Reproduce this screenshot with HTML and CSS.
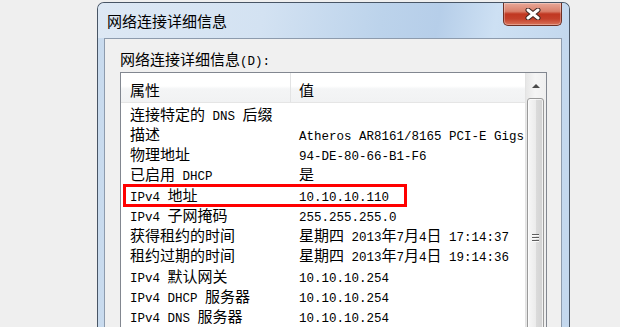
FILE: index.html
```html
<!DOCTYPE html>
<html lang="zh-CN">

<head>
    <meta charset="UTF-8">
    <title>网络连接详细信息</title>
    <link rel="stylesheet" href="styles.css">
</head>

<body>
    <div class="window">
        <div class="titlebar">
            <span class="title">网络连接详细信息</span>
            <button class="close" title="关闭">
                <svg width="16" height="12" viewBox="0 0 16 12">
                    <path d="M3 2 L13 10 M13 2 L3 10" stroke="#3b2420" stroke-width="5" stroke-linecap="round" />
                    <path d="M3 2 L13 10 M13 2 L3 10" stroke="#fff" stroke-width="3" stroke-linecap="round" />
                </svg>
            </button>
        </div>
        <div class="client">
            <div class="caption">网络连接详细信息<span class="en">(D):</span></div>
            <div class="listbox">
                <div class="list">
                    <div class="head">
                        <div class="col-name">属性</div>
                        <div class="col-value">值</div>
                    </div>
                    <div class="rows">
                        <div class="row"><div class="name">连接特定的<span class="en"> DNS </span>后缀</div><div class="value"></div></div>
                        <div class="row"><div class="name">描述</div><div class="value"><span class="en">Atheros AR8161/8165 PCI-E Gigs</span></div></div>
                        <div class="row"><div class="name">物理地址</div><div class="value"><span class="en">94-DE-80-66-B1-F6</span></div></div>
                        <div class="row"><div class="name">已启用<span class="en"> DHCP</span></div><div class="value">是</div></div>
                        <div class="row">
                            <div class="name"><span class="en">IPv4 </span>地址</div><div class="value"><span class="en">10.10.10.110</span></div>
                            <div class="mark"></div>
                        </div>
                        <div class="row"><div class="name"><span class="en">IPv4 </span>子网掩码</div><div class="value"><span class="en">255.255.255.0</span></div></div>
                        <div class="row"><div class="name">获得租约的时间</div><div class="value">星期四<span class="en"> 2013</span>年<span class="en">7</span>月<span class="en">4</span>日<span class="en"> 17:14:37</span></div></div>
                        <div class="row"><div class="name">租约过期的时间</div><div class="value">星期四<span class="en"> 2013</span>年<span class="en">7</span>月<span class="en">4</span>日<span class="en"> 19:14:36</span></div></div>
                        <div class="row"><div class="name"><span class="en">IPv4 </span>默认网关</div><div class="value"><span class="en">10.10.10.254</span></div></div>
                        <div class="row"><div class="name"><span class="en">IPv4 DHCP </span>服务器</div><div class="value"><span class="en">10.10.10.254</span></div></div>
                        <div class="row"><div class="name"><span class="en">IPv4 DNS </span>服务器</div><div class="value"><span class="en">10.10.10.254</span></div></div>
                    </div>
                </div>
                <div class="scrollbar">
                    <div class="arrow-up"></div>
                    <div class="thumb"><span class="grip"></span></div>
                </div>
            </div>
        </div>
    </div>
</body>

</html>
```

FILE: styles.css
```css
body {
    margin: 0;
    height: 327px;
    overflow: hidden;
    background-color: #efefef;
    font-family: "Noto Sans CJK SC", sans-serif;
    font-size: 15px;
    color: #000;
}

.en {
    font-family: "Liberation Mono", monospace;
    font-size: 12.5px;
}

.window {
    box-sizing: border-box;
    width: 473px;
    height: 325px;
    margin: 2px 0 0 97px;
    border: 1px solid #485565;
    border-bottom: none;
    border-radius: 7px 7px 0 0;
    background: linear-gradient(to right, #c9dbee, #bcd2ea 60%, #c4d8ee);
    display: flex;
    flex-direction: column;
}

.titlebar {
    height: 35px;
    flex: none;
    display: flex;
    align-items: center;
    padding-left: 9px;
    border-radius: 6px 6px 0 0;
    background: linear-gradient(100deg, #dde8f4 0%, #d3e2f2 35%, #bcd3eb 60%, #b6cee9 72%, #cde0f3 84%, #c3d8ee 100%);
}

.title {
    line-height: 20px;
    margin-top: 1px;
}

.close {
    margin-left: auto;
    margin-right: 7px;
    align-self: flex-start;
    width: 59px;
    height: 23px;
    padding: 0;
    border: 1px solid #6e3024;
    border-top: none;
    border-radius: 0 0 5px 5px;
    background: linear-gradient(#e8a898 0%, #d9806b 38%, #c03721 50%, #c4402a 72%, #d9745a 100%);
    box-shadow: inset 0 0 0 1px rgba(255, 255, 255, 0.3);
    display: flex;
    align-items: center;
    justify-content: center;
}

.client {
    flex: 1;
    min-height: 0;
    margin: 0 7px 0 6px;
    border: 1px solid #8d9bad;
    border-bottom: none;
    background-color: #f0f0f0;
    display: flex;
    flex-direction: column;
}

.caption {
    margin: 11px 0 0 15px;
    height: 18px;
    line-height: 18px;
}

.listbox {
    box-sizing: border-box;
    width: 427px;
    flex: 1;
    min-height: 0;
    margin: 4px 0 0 15px;
    border: 1px solid #828790;
    border-bottom: none;
    background-color: #fff;
    display: flex;
}

.list {
    flex: 1;
    min-width: 0;
    overflow: hidden;
}

.head {
    display: flex;
    height: 29px;
    border-bottom: 1px solid #e5e5e5;
    background: linear-gradient(#fff 0%, #fff 45%, #f4f5f6 55%, #f1f2f3 100%);
}

.head>div {
    box-sizing: border-box;
    height: 29px;
    padding-top: 6px;
    line-height: 22px;
}

.col-name {
    width: 170px;
    padding-left: 9px;
    border-right: 1px solid #e2e3e4;
}

.col-value {
    padding-left: 8px;
}

.rows {
    padding-top: 0.5px;
}

.row {
    position: relative;
    display: flex;
    height: 20.25px;
    line-height: 20px;
    white-space: nowrap;
}

.name {
    box-sizing: border-box;
    width: 178px;
    flex: none;
    padding-left: 9px;
}

.value {
    flex: none;
}

/* cadre rouge autour de la ligne IPv4 */
.mark {
    position: absolute;
    left: 2px;
    top: -0.5px;
    box-sizing: border-box;
    width: 284px;
    height: 23px;
    border: 3px solid #f00;
}

.scrollbar {
    box-sizing: border-box;
    width: 21px;
    flex: none;
    overflow: hidden;
    border-left: 1px solid #e3e3e3;
    background: linear-gradient(to right, #e7e7e7, #f5f5f5 45%, #efefef);
}

.arrow-up {
    height: 25px;
    display: flex;
    align-items: center;
    justify-content: center;
}

.arrow-up::before {
    content: "";
    border-left: 4px solid transparent;
    border-right: 4px solid transparent;
    border-bottom: 4px solid #4a4a4a;
    margin-top: 1px;
}

.thumb {
    box-sizing: border-box;
    width: 17px;
    height: 280px;
    margin-left: 1px;
    border: 1px solid #9a9a9a;
    border-radius: 3px;
    background: linear-gradient(to right, #f7f7f7, #ececec 50%, #dcdcdc 51%, #d2d2d2);
    box-shadow: inset 0 0 0 1px rgba(255, 255, 255, 0.7);
    display: flex;
    align-items: center;
    justify-content: center;
}

.grip {
    width: 7px;
    height: 8px;
    background: linear-gradient(#5e5e5e 1px, #fafafa 1px, #fafafa 2px, transparent 2px) 0 0 / 100% 3px;
}
```
